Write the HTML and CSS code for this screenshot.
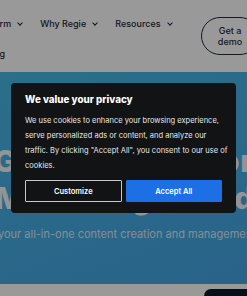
FILE: index.html
```html
<!DOCTYPE html>
<html lang="en">
<head>
    <meta charset="UTF-8">
    <meta name="viewport" content="width=device-width, initial-scale=1.0">
    <title>Regie.ai</title>
    <link rel="stylesheet" href="styles.css">
</head>
<body>
    <header class="header">
        <nav class="nav">
            <a class="nav-item">Platform <span class="chev"></span></a>
            <a class="nav-item">Why Regie <span class="chev"></span></a>
            <a class="nav-item">Resources <span class="chev"></span></a>
            <a class="nav-item">Pricing</a>
        </nav>
        <a class="demo-btn">Get a<br>demo</a>
    </header>

    <section class="hero">
        <h1 class="hero-title">
            <span class="line">Generative AI for</span>
            <span class="line">MMarketing &amp; Media</span>
        </h1>
        <p class="hero-sub">your all-in-one content creation and management</p>
    </section>

    <section class="below">
        <span class="dark-pill"></span>
    </section>

    <div class="overlay"></div>

    <div class="consent">
        <h2>We value your privacy</h2>
        <p>We use cookies to enhance your browsing experience,<br>serve personalized ads or content, and analyze our<br>traffic. By clicking "Accept All", you consent to our use of<br>cookies.</p>
        <div class="consent-actions">
            <button class="btn btn-outline">Customize</button>
            <button class="btn btn-primary">Accept All</button>
        </div>
    </div>
</body>
</html>
```

FILE: styles.css
```css
:root {
    --navy: #1f2a36;
    --hero-a: #48b9e4;
    --hero-b: #45a5e6;
    --panel: #121314;
    --blue: #1d6fe6;
}

body {
    margin: 0;
    font-family: 'Inter', 'Noto Sans', sans-serif;
    width: 247px;
    height: 296px;
    overflow: hidden;
    background: #fff;
}

.header {
    height: 72px;
    background: #fff;
    display: flex;
    align-items: flex-start;
    overflow: hidden;
}
.nav {
    display: flex;
    flex-wrap: wrap;
    width: 226px;
    margin-left: -25px;
    row-gap: 14px;
    column-gap: 18px;
    padding-top: 16px;
    flex-shrink: 0;
}
.nav-item {
    display: flex;
    align-items: center;
    gap: 7px;
    font-size: 9px;
    font-weight: 500;
    color: var(--navy);
    line-height: 16px;
}
.chev {
    width: 3px;
    height: 3px;
    border-right: 1px solid var(--navy);
    border-bottom: 1px solid var(--navy);
    transform: rotate(45deg);
    margin-top: -2px;
}
.demo-btn {
    flex-shrink: 0;
    margin-left: auto;
    margin-top: 17px;
    margin-right: -10px;
    width: 56px;
    height: 36px;
    border: 1.5px solid var(--navy);
    border-radius: 20px;
    display: flex;
    align-items: center;
    justify-content: center;
    text-align: center;
    font-size: 9px;
    font-weight: 500;
    line-height: 11px;
    color: var(--navy);
}

.hero {
    height: 212px;
    background: linear-gradient(160deg, var(--hero-a), var(--hero-b));
    overflow: hidden;
    padding-top: 71px;
    box-sizing: border-box;
}
.hero-title {
    margin: 0;
    font-size: 30px;
    font-weight: 800;
    letter-spacing: 0.5px;
    line-height: 37px;
    color: #f4f7f9;
    display: flex;
    flex-direction: column;
    align-items: center;
}
.hero-title .line {
    white-space: nowrap;
}
.hero-sub {
    margin: 10px 0 0;
    font-size: 11px;
    color: rgba(255, 255, 255, 0.8);
    white-space: nowrap;
    margin-left: -2px;
}

.below {
    height: 12px;
    background: #fff;
    display: flex;
    justify-content: flex-end;
    align-items: flex-end;
}
.dark-pill {
    width: 43px;
    height: 7px;
    background: #0c1a2b;
    border-radius: 8px 0 0 0;
}

.overlay {
    position: fixed;
    inset: 0;
    background: rgba(0, 0, 0, 0.4);
}

.consent {
    position: fixed;
    left: 11px;
    top: 83px;
    width: 225px;
    box-sizing: border-box;
    padding: 10px 10px 11px 14px;
    background: var(--panel);
    border-radius: 4px;
    color: #fff;
}
.consent h2 {
    margin: 0 0 6px;
    font-size: 9.8px;
    font-weight: 800;
    line-height: 14px;
}
.consent p {
    margin: 0;
    font-size: 7.5px;
    line-height: 15px;
    color: #e8e8e8;
    white-space: nowrap;
}
.consent-actions {
    display: flex;
    gap: 4px;
    margin-top: 7px;
    margin-right: 4px;
}
.btn {
    flex: 1;
    height: 22px;
    font-family: inherit;
    font-size: 7.5px;
    font-weight: 600;
    color: #fff;
    border-radius: 1px;
    padding: 0;
}
.btn-outline {
    background: var(--panel);
    border: 1px solid #c9c9c9;
}
.btn-primary {
    background: var(--blue);
    border: 1px solid var(--blue);
}
```
